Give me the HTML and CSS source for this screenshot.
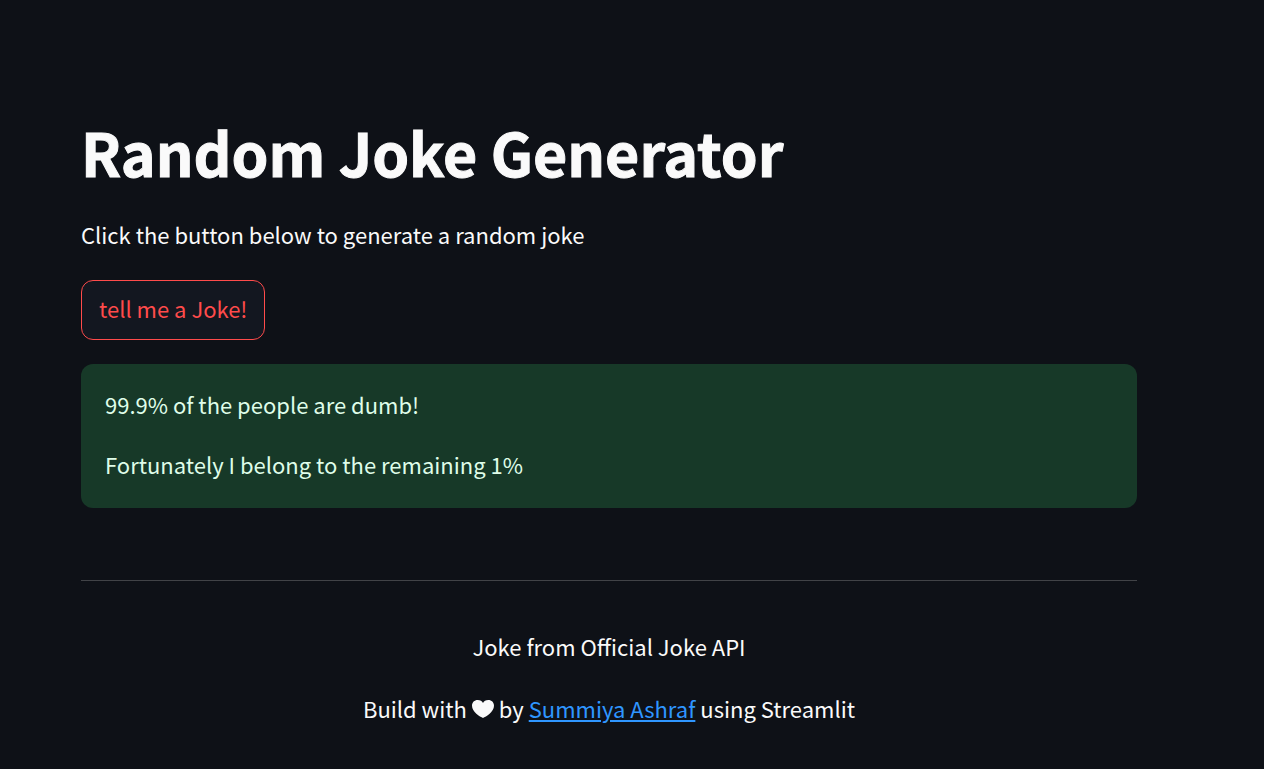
FILE: index.html
```html
<!DOCTYPE html>
<html lang="en">
<head>
<meta charset="utf-8">
<title>Random Joke Generator</title>
<link rel="stylesheet" href="styles.css">
</head>
<body>
<main class="page">
  <h1 class="title">Random Joke Generator</h1>
  <p class="intro">Click the button below to generate a random joke</p>
  <button class="joke-button" type="button">tell me a Joke!</button>
  <section class="joke">
    <p class="joke-line">99.9% of the people are dumb!</p>
    <p class="joke-line">Fortunately I belong to the remaining 1%</p>
  </section>
  <hr class="divider">
  <footer class="footer">
    <p class="footer-line">Joke from Official Joke API</p>
    <p class="footer-line">Build with <svg class="heart" viewBox="0 0 22 18" role="img" aria-label="love"><path d="M11 18C8 16.800 0 12 0 5.800C0 2.400 2.400 0 5.700 0C8.300 0 10.200 1.200 11 3C11.800 1.200 13.700 0 16.300 0C19.600 0 22 2.400 22 5.800C22 12 14 16.800 11 18Z"/></svg> by <a class="link" href="#">Summiya Ashraf</a> using Streamlit</p>
  </footer>
</main>
</body>
</html>
```
FILE: styles.css
```css
body {
  margin: 0;
  background: #0e1117;
  color: #fafafa;
  font-family: "Source Sans Pro", "Noto Sans CJK SC", sans-serif;
  font-size: 22px;
  line-height: 36px;
}

.page {
  display: flex;
  flex-direction: column;
  align-items: stretch;
  padding: 112px 127px 40px 81px;
}

.title {
  margin: 0 0 24px;
  font-size: 59px;
  font-weight: 700;
  line-height: 80px;
  -webkit-text-stroke: 1px #fafafa;
}

.intro {
  margin: 0 0 28px;
}

.joke-button {
  align-self: flex-start;
  padding: 9px 17px 13px;
  border: 1px solid #ff4b4b;
  border-radius: 12px;
  background: #131720;
  color: #ff4b4b;
  font: inherit;
}

.joke {
  display: flex;
  flex-direction: column;
  gap: 24px;
  margin-top: 24px;
  padding: 22px 24px 26px;
  border-radius: 12px;
  background: #173928;
  color: #dffde9;
}

.joke-line {
  margin: 0;
}

.divider {
  width: 100%;
  margin: 72px 0 47px;
  border: 0;
  border-top: 1px solid #414347;
}

.footer {
  display: flex;
  flex-direction: column;
  gap: 26px;
  text-align: center;
}

.footer-line {
  margin: 0;
}

.heart {
  width: 22px;
  height: 18px;
  vertical-align: 0;
  fill: #fafafa;
}

.link {
  color: #2f96ff;
  text-decoration-thickness: 2px;
  text-underline-offset: 2px;
}
```
